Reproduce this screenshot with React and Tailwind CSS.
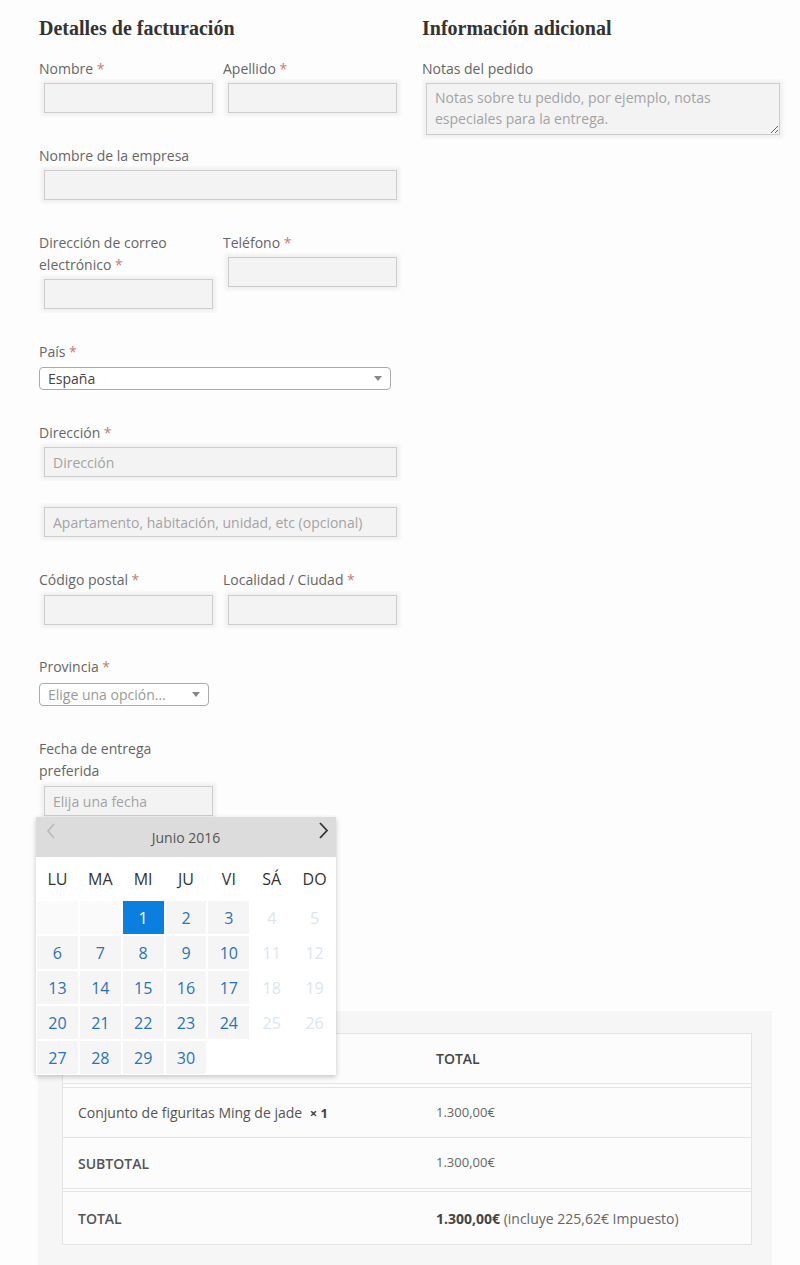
import React from 'react';

const field = 'block w-full h-[30px] bg-[#f3f3f3] border border-[#cdcdcd] shadow-[0_0_3px_3px_#f1f1f1] px-2 text-[14px] text-[#444] placeholder:text-[#a3a3a3] outline-none';

function Label({ text, required, className = '' }) {
    return (
        <label className={`block text-[14px] leading-[22px] text-[#666] ${className}`}>
            {text}
            {required && <span className="text-[#c47c78]"> *</span>}
        </label>
    );
}

function Input({ placeholder = '', className = '' }) {
    return (
        <div className={`pl-[5px] ${className}`}>
            <input className={field} placeholder={placeholder} />
        </div>
    );
}

function Caret() {
    return (
        <svg width="8" height="5" viewBox="0 0 8 5" className="shrink-0">
            <path d="M0 0 L8 0 L4 5 Z" fill="#888" />
        </svg>
    );
}

function Select({ value, muted, className = '' }) {
    return (
        <div className={`mt-1 h-[23px] flex items-center justify-between border border-[#aaa] rounded bg-white pl-2 pr-[8px] ${className}`}>
            <span className={`text-[14px] ${muted ? 'text-[#999]' : 'text-[#444]'}`}>{value}</span>
            <Caret />
        </div>
    );
}

const weekdays = ['LU', 'MA', 'MI', 'JU', 'VI', 'SÁ', 'DO'];

function Calendar() {
    const cells = [null, null];
    for (let d = 1; d <= 30; d++) cells.push(d);
    while (cells.length < 35) cells.push(null);

    return (
        <div className="absolute left-[-3px] top-[calc(100%+1px)] w-[300px] z-10 bg-white shadow-[0_2px_5px_rgba(0,0,0,0.22)]">
            <div className="relative h-[40px] bg-[#dcdcdc] flex items-center justify-center">
                <svg width="10" height="16" viewBox="0 0 10 16" className="absolute left-[10px] top-[6px]">
                    <path d="M8 1 L2 8 L8 15" fill="none" stroke="#b9b9b9" strokeWidth="1.6" />
                </svg>
                <span className="text-[14px] text-[#555]">Junio 2016</span>
                <svg width="11" height="17" viewBox="0 0 11 17" className="absolute right-[7px] top-[5px]">
                    <path d="M2 1 L9 8.5 L2 16" fill="none" stroke="#333" strokeWidth="1.8" />
                </svg>
            </div>
            <div className="grid grid-cols-7 h-[43px] items-center">
                {weekdays.map((w) => (
                    <div key={w} className="text-center text-[16px] text-[#333]">{w}</div>
                ))}
            </div>
            <div className="grid grid-cols-7">
                {cells.map((d, i) => {
                    const weekend = i % 7 >= 5;
                    let cls = 'bg-white';
                    if (d === 1) cls = 'bg-[#0b7fe0] text-white';
                    else if (d && weekend) cls = 'bg-white text-[#dbe6ef]';
                    else if (d) cls = 'bg-[#f5f5f5] text-[#2a73bb]';
                    else if (i < 2) cls = 'bg-[#fafafa]';
                    return (
                        <div key={i} className={`h-[35px] flex items-center justify-center text-[16px] border border-white ${cls}`}>
                            {d || ''}
                        </div>
                    );
                })}
            </div>
        </div>
    );
}

export default function App() {
    return (
        <div className="min-h-[1265px] bg-[#fdfdfd] font-['Open_Sans',sans-serif] pt-[14px] pl-[39px] pr-[20px]">
            <div className="flex gap-[25px]">
                {/* Billing details */}
                <div className="w-[358px]">
                    <h3 className="font-['Liberation_Serif',serif] font-bold text-[20px] leading-[28px] text-[#333] mb-[16px]">
                        Detalles de facturación
                    </h3>

                    <div className="grid grid-cols-2 gap-x-[10px] mb-8">
                        <div>
                            <Label text="Nombre" required />
                            <Input className="mt-[3px]" />
                        </div>
                        <div>
                            <Label text="Apellido" required />
                            <Input className="mt-[3px]" />
                        </div>
                    </div>

                    <div className="mb-8">
                        <Label text="Nombre de la empresa" />
                        <Input className="mt-[3px]" />
                    </div>

                    <div className="grid grid-cols-2 gap-x-[10px] mb-8 items-start">
                        <div>
                            <Label text="Dirección de correo electrónico" required className="pr-10" />
                            <Input className="mt-[3px]" />
                        </div>
                        <div>
                            <Label text="Teléfono" required />
                            <Input className="mt-[3px]" />
                        </div>
                    </div>

                    <div className="mb-8 pr-[6px]">
                        <Label text="País" required />
                        <Select value="España" />
                    </div>

                    <div className="mb-[30px]">
                        <Label text="Dirección" required />
                        <Input className="mt-[3px]" placeholder="Dirección" />
                    </div>
                    <Input className="mb-8" placeholder="Apartamento, habitación, unidad, etc (opcional)" />

                    <div className="grid grid-cols-2 gap-x-[10px] mb-[31px]">
                        <div>
                            <Label text="Código postal" required />
                            <Input className="mt-1" />
                        </div>
                        <div>
                            <Label text="Localidad / Ciudad" required />
                            <Input className="mt-1" />
                        </div>
                    </div>

                    <div className="mb-8 w-[170px]">
                        <Label text="Provincia" required />
                        <Select value="Elige una opción…" muted className="mt-[5px]" />
                    </div>

                    <div className="w-[174px]">
                        <Label text="Fecha de entrega preferida" className="pr-12" />
                        <div className="relative mt-1">
                            <Input placeholder="Elija una fecha" />
                            <Calendar />
                        </div>
                    </div>
                </div>

                {/* Additional info */}
                <div className="w-[358px]">
                    <h3 className="font-['Liberation_Serif',serif] font-bold text-[20px] leading-[28px] text-[#333] mb-[16px]">
                        Información adicional
                    </h3>
                    <Label text="Notas del pedido" />
                    <div className="pl-[4px] mt-[3px]">
                        <textarea
                            className="block w-full h-[52px] bg-[#f3f3f3] border border-[#cdcdcd] shadow-[0_0_3px_3px_#f1f1f1] px-2 py-[3px] text-[14px] leading-[21px] text-[#444] placeholder:text-[#a3a3a3] outline-none"
                            placeholder="Notas sobre tu pedido, por ejemplo, notas especiales para la entrega."
                        />
                    </div>
                </div>
            </div>

            {/* Order review */}
            <div className="mt-[195px] ml-[-1px] w-[734px] bg-[#f6f6f6] pt-[22px] pl-[24px] pr-[20px] pb-[22px]">
                <div className="bg-[#fcfcfc] border border-[#e4e4e4] text-[14px]">
                    <div className="grid grid-cols-[360px_1fr] h-[50px] items-center border-b border-[#e4e4e4]">
                        <div />
                        <div className="pl-[13px] font-semibold text-[#444]">TOTAL</div>
                    </div>
                    <div className="grid grid-cols-[360px_1fr] h-[51px] items-center border-t border-b border-[#e4e4e4] mt-[3px]">
                        <div className="pl-[15px] text-[#555]">
                            Conjunto de figuritas Ming de jade <strong className="ml-1 text-[13px] text-[#444]">× 1</strong>
                        </div>
                        <div className="pl-[13px] text-[13px] text-[#666]">1.300,00€</div>
                    </div>
                    <div className="grid grid-cols-[360px_1fr] h-[51px] items-center border-b border-[#e4e4e4]">
                        <div className="pl-[15px] font-semibold text-[#555]">SUBTOTAL</div>
                        <div className="pl-[13px] text-[13px] text-[#666]">1.300,00€</div>
                    </div>
                    <div className="grid grid-cols-[360px_1fr] h-[53px] items-center border-t border-[#e4e4e4] mt-[2px]">
                        <div className="pl-[15px] font-semibold text-[#555]">TOTAL</div>
                        <div className="pl-[13px] text-[14px] text-[#666]">
                            <strong className="text-[#444]">1.300,00€</strong> (incluye 225,62€ Impuesto)
                        </div>
                    </div>
                </div>
            </div>
        </div>
    );
}
